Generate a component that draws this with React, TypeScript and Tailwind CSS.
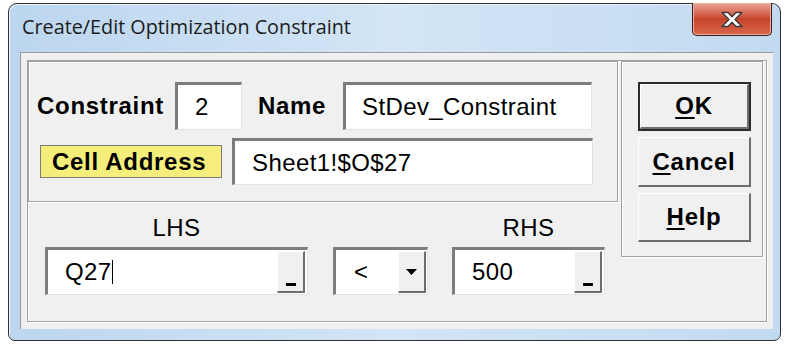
import React from 'react';

const sunken =
  'bg-white border-t-[3px] border-l-[3px] border-b border-r border-t-[#7d7d7d] border-l-[#7d7d7d] border-b-[#e3e3e3] border-r-[#e3e3e3]';
const etched = 'border border-[#a0a0a0] shadow-[inset_1px_1px_0_#ffffff,1px_1px_0_#ffffff]';
const raised =
  'bg-[#f0f0f0] border-t border-l border-b-2 border-r-2 border-t-[#ffffff] border-l-[#ffffff] border-b-[#6d6d6d] border-r-[#6d6d6d]';

function PickButton() {
  return (
    <div className={`${raised} w-[28px] h-full flex items-end justify-center pb-[5px]`}>
      <div className="w-[10px] h-[3px] bg-black" />
    </div>
  );
}

function CloseGlyph() {
  return (
    <svg width="24" height="17" viewBox="0 0 24 17">
      <path
        d="M2 1.5h6l4 4.2 4-4.2h6l-7 7 7 7h-6l-4-4.2-4 4.2H2l7-7z"
        fill="#ffffff"
        stroke="#3a3a3a"
        strokeWidth="1.4"
        strokeLinejoin="round"
      />
    </svg>
  );
}

export default function App() {
  const label = "font-['Liberation_Sans',Arial,sans-serif] font-bold text-[24px] tracking-[0.7px] text-black";
  const field = "font-['Liberation_Sans',Arial,sans-serif] text-[24px] tracking-[0.4px] text-black";

  return (
    <div className="w-[790px] h-[350px] bg-white pt-[3px] pl-[8px]">
      <div className="w-[773px] h-[338px] border border-[#2f2f2f] rounded-t-[9px] rounded-b-[7px] bg-gradient-to-r from-[#bcd6ef] via-[#d3e5f6] to-[#c2daf1] flex flex-col pl-[11px] pr-[7px] pb-[11px] shadow-[inset_1px_1px_0_#eef5fc]">
        {/* title bar */}
        <div className="h-[48px] flex items-start justify-between">
          <span className="mt-[8px] ml-[2px] font-['Open_Sans','Noto_Sans',sans-serif] text-[19.8px] text-[#1b1b1b]">
            Create/Edit Optimization Constraint
          </span>
          <div className="-mt-px mr-[1px] w-[80px] h-[33px] rounded-b-[5px] border border-[#3d1b14] border-t-0 bg-gradient-to-b from-[#e8a596] via-[#c7432a] to-[#d7674b] flex items-center justify-center shadow-[inset_0_0_0_1px_#efb1a3]">
            <CloseGlyph />
          </div>
        </div>

        {/* client area */}
        <div className="flex-1 bg-[#f0f0f0] border-t border-l border-[#9a9a9a] pt-[7px] pl-[6px] pr-[6px] pb-[7px]">
          <div className={`h-full ${etched} flex pr-[3px]`}>
            {/* left column */}
            <div className="w-[590px] flex flex-col">
              <div className={`h-[141px] ${etched} flex flex-col pl-[8px] pt-[20px]`}>
                <div className="flex items-center h-[48px]">
                  <span className={`${label} w-[138px]`}>Constraint</span>
                  <div className={`${sunken} w-[67px] h-[48px] flex items-center pl-[17px] ${field}`}>2</div>
                  <span className={`${label} ml-[16px] w-[85px]`}>Name</span>
                  <div className={`${sunken} w-[249px] h-[48px] flex items-center pl-[16px] ${field}`}>
                    StDev_Constraint
                  </div>
                </div>
                <div className="flex items-center h-[47px] mt-[8px] pl-[3px]">
                  <div className="w-[182px] h-[33px] bg-[#f5ee7a] border border-[#7b7b7b] flex items-center pl-[11px]">
                    <span className={label}>Cell Address</span>
                  </div>
                  <div className={`${sunken} ml-[10px] w-[361px] h-[47px] flex items-center pl-[17px] ${field}`}>
                    Sheet1!$O$27
                  </div>
                </div>
              </div>

              {/* bottom section */}
              <div className="flex pl-[17px] pt-[14px]">
                <div className="w-[263px] flex flex-col">
                  <span className={`${field} text-center h-[31px] leading-[24px]`}>LHS</span>
                  <div className={`${sunken} h-[48px] flex items-stretch pr-[2px] py-[1px]`}>
                    <div className={`flex-1 flex items-center pl-[17px] ${field}`}>
                      Q27
                      <span className="w-px h-[24px] bg-black" />
                    </div>
                    <PickButton />
                  </div>
                </div>
                <div className={`${sunken} ml-[25px] mt-[31px] w-[95px] h-[48px] flex items-stretch pr-[1px] py-[1px]`}>
                  <div className={`flex-1 flex items-center pl-[18px] ${field} text-[20px]`}>&lt;</div>
                  <div className={`${raised} w-[28px] flex items-center justify-center`}>
                    <svg width="13" height="8" viewBox="0 0 13 8">
                      <path d="M1 1h11L6.5 7z" fill="#000" />
                    </svg>
                  </div>
                </div>
                <div className="ml-[24px] w-[153px] flex flex-col">
                  <span className={`${field} text-center h-[31px] leading-[24px]`}>RHS</span>
                  <div className={`${sunken} h-[48px] flex items-stretch pr-[2px] py-[1px]`}>
                    <div className={`flex-1 flex items-center pl-[17px] ${field}`}>500</div>
                    <PickButton />
                  </div>
                </div>
              </div>
            </div>

            {/* right column */}
            <div className={`ml-[3px] w-[142px] h-[196px] ${etched} flex flex-col gap-[6px] pl-[16px] pt-[20px]`}>
              <div className="w-[113px] h-[49px] border-2 border-[#2b2b2b] flex">
                <div className={`${raised} flex-1 flex items-center justify-center ${label}`}>
                  <span><span className="underline underline-offset-[3px] decoration-2">O</span>K</span>
                </div>
              </div>
              <div className={`${raised} w-[113px] h-[50px] flex items-center justify-center ${label}`}>
                <span><span className="underline underline-offset-[3px] decoration-2">C</span>ancel</span>
              </div>
              <div className={`${raised} w-[113px] h-[49px] flex items-center justify-center ${label}`}>
                <span><span className="underline underline-offset-[3px] decoration-2">H</span>elp</span>
              </div>
            </div>
          </div>
        </div>
      </div>
    </div>
  );
}
